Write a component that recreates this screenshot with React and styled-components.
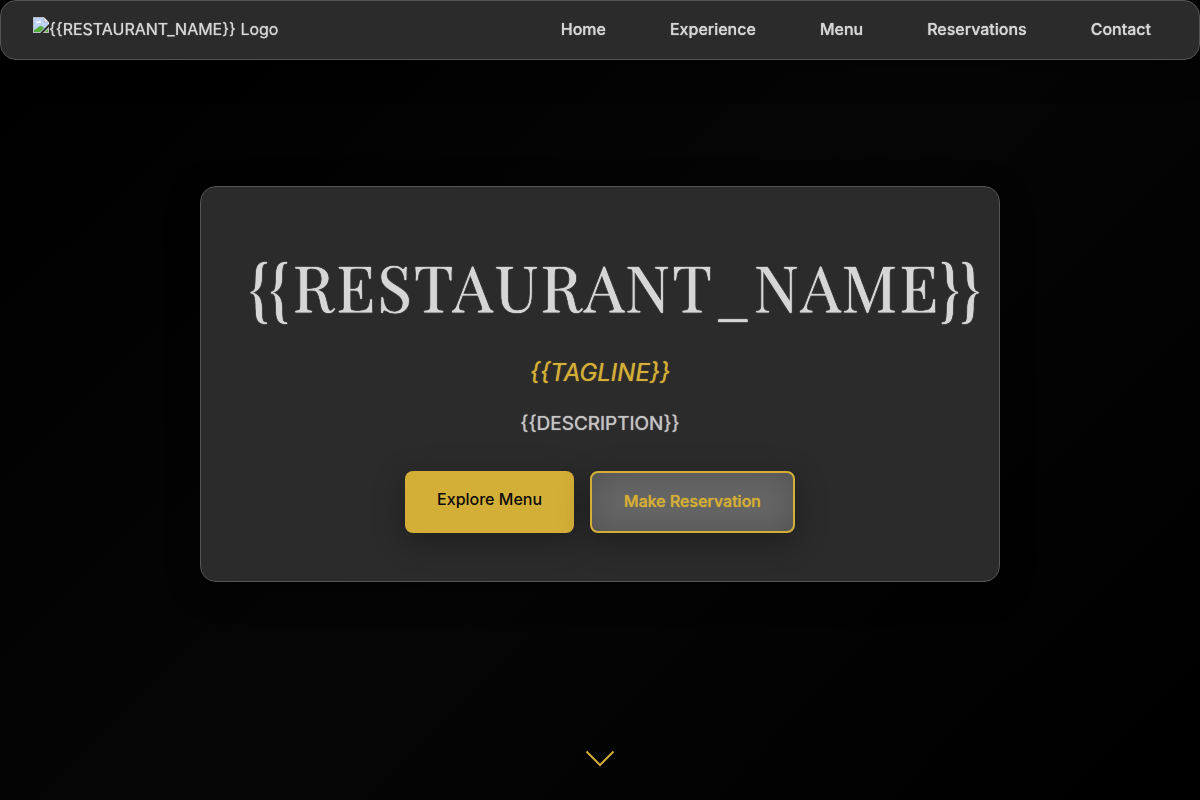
import React from "react";
import styled, { createGlobalStyle, css } from "styled-components";

const GlobalStyle = createGlobalStyle`
  * { box-sizing: border-box; }
  body {
    margin: 0;
    background: #000;
    color: #d6d6d6;
    font-family: Inter, "Liberation Sans", sans-serif;
    font-size: 16px;
    line-height: 24px;
  }
`;

const glass = css`
  background: #2b2b2b;
  border: 1px solid #545454;
  border-radius: 16px;
  box-shadow: 0 8px 32px rgba(0, 0, 0, 0.4);
`;

const softGlow = css`
  text-shadow: 0 0 1px currentColor;
`;

const Header = styled.header`
  ${glass}
  ${softGlow}
  position: fixed;
  inset: 0 0 auto;
  z-index: 1;
  display: flex;
  align-items: center;
  justify-content: space-between;
  padding: 16px 32px 18px;
`;

const Logo = styled.a`
  display: flex;
  align-items: flex-start;
  color: inherit;
  text-decoration: none;

  svg { flex: none; }
`;

const Nav = styled.nav`
  display: flex;
  gap: 32px;
`;

const NavLink = styled.a`
  padding: 0 16px;
  color: inherit;
  font-weight: 500;
  text-decoration: none;
`;

const Hero = styled.main`
  display: grid;
  grid-template-columns: minmax(0, 1fr);
  justify-items: center;
  min-height: 100vh;
  padding-bottom: 32px;
  background: linear-gradient(135deg, #000 0%, #050505 50%, #000 100%);
`;

const Card = styled.section`
  ${glass}
  grid-area: 1 / 1;
  align-self: center;
  width: 100%;
  max-width: 800px;
  padding: 48px;
  text-align: center;
`;

const Title = styled.h1`
  margin: 0 0 16px;
  font-family: "Playfair Display", "Liberation Serif", serif;
  font-size: 64px;
  font-weight: 400;
  line-height: 102px;
  letter-spacing: 2px;
  text-shadow: 0 0 1px currentColor, 0 0 1px currentColor;
`;

const Tagline = styled.p`
  ${softGlow}
  margin: 0 0 16px;
  color: #d4af37;
  font-size: 24px;
  font-style: italic;
  line-height: 40px;
`;

const Description = styled.p`
  ${softGlow}
  margin: 0 0 32px;
  color: #c4c4c4;
  font-size: 19px;
  line-height: 30px;
`;

const Actions = styled.div`
  display: flex;
  justify-content: center;
  gap: 16px;
`;

const Action = styled.a`
  padding: 16px 32px 18px;
  border-radius: 8px;
  font-weight: 500;
  text-decoration: none;
  color: ${(p) => (p.$outlined ? "#d4af37" : "#0a0a0a")};
  background: ${(p) => (p.$outlined ? "#666" : "#d4af37")};
  border: ${(p) => (p.$outlined ? "2px solid #d4af37" : "0")};
  box-shadow: 0 8px 32px rgba(0, 0, 0, 0.3)
    ${(p) => p.$outlined && ", inset 0 0 32px rgba(0, 0, 0, 0.2)"};
  ${(p) => p.$outlined && softGlow}
`;

const ScrollCue = styled.a`
  grid-area: 1 / 1;
  align-self: end;
  display: flex;
`;

const links = ["Home", "Experience", "Menu", "Reservations", "Contact"];

function PictureIcon() {
  return (
    <svg width="16" height="16" viewBox="0 0 16 16" aria-hidden="true">
      <path d="M0 0h11l5 5v11H0z" fill="#f5f7fa" />
      <path d="M1 1h10v4h4v3L8 15H1z" fill="#bdd3fa" />
      <path d="M3 6c0-2 2-2 2-1 1-2 4-1 3 1z" fill="#fff" />
      <path d="M1 15v-2c3-1 4-4 7-4 1 0 2 1 3 2l-4 4z" fill="#53ae36" />
      <path d="M11 0l5 5h-5z" fill="#fff" stroke="#a5abb4" />
      <path d="M16 0v5L11 0z" fill="#2b2b2b" />
      <path d="M16 7v3l-6 6H7z" fill="#2b2b2b" />
      <path d="M15 12v3h-3z" fill="#53ae36" />
      <path d="M0 .5h11M.5 0v16M0 15.5h7M15.500 11v5M11 15.500h5" fill="none" stroke="#b8bdc4" />
    </svg>
  );
}

export default function App() {
  return (
    <>
      <GlobalStyle />
      <Header>
        <Logo href="#home">
          <PictureIcon />
          {"{{RESTAURANT_NAME}} Logo"}
        </Logo>
        <Nav>
          {links.map((label) => (
            <NavLink key={label} href={`#${label.toLowerCase()}`}>{label}</NavLink>
          ))}
        </Nav>
      </Header>
      <Hero id="home">
        <Card>
          <Title>{"{{RESTAURANT_NAME}}"}</Title>
          <Tagline>{"{{TAGLINE}}"}</Tagline>
          <Description>{"{{DESCRIPTION}}"}</Description>
          <Actions>
            <Action href="#menu">Explore Menu</Action>
            <Action href="#reservations" $outlined>Make Reservation</Action>
          </Actions>
        </Card>
        <ScrollCue href="#experience" aria-label="Scroll down">
          <svg width="30" height="18" viewBox="0 0 30 18" fill="none" stroke="#d4af37" strokeWidth="2" aria-hidden="true">
            <path d="M1.5 1.5L15 15L28.5 1.5" />
          </svg>
        </ScrollCue>
      </Hero>
    </>
  );
}
